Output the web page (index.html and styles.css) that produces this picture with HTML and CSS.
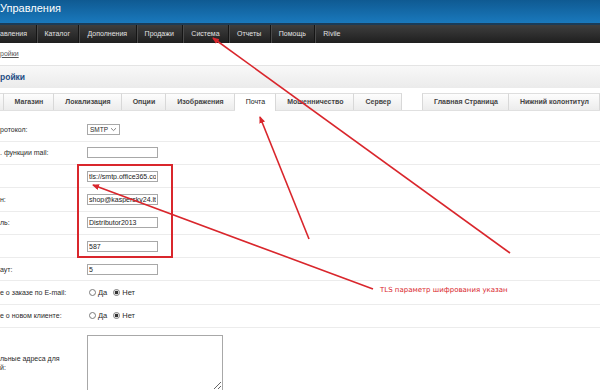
FILE: index.html
```html
<!DOCTYPE html>
<html lang="ru">
<head>
    <meta charset="UTF-8">
    <meta name="viewport" content="width=device-width, initial-scale=1.0">
    <title>Настройки</title>
    <link rel="stylesheet" href="styles.css">
</head>
<body>
<div class="page">

    <div class="header">
        <h1>Управления</h1>
    </div>

    <ul class="menu">
        <li>авления</li>
        <li>Каталог</li>
        <li>Дополнения</li>
        <li>Продажи</li>
        <li>Система</li>
        <li>Отчеты</li>
        <li>Помощь</li>
        <li>Rivile</li>
    </ul>

    <div class="breadcrumb"><a href="#">ройки</a></div>

    <div class="heading"><h2>ройки</h2></div>

    <div class="tabs">
        <a class="tab tab-cut" href="#"></a>
        <a class="tab" href="#">Магазин</a>
        <a class="tab" href="#">Локализация</a>
        <a class="tab" href="#">Опции</a>
        <a class="tab" href="#">Изображения</a>
        <a class="tab active" href="#">Почта</a>
        <a class="tab" href="#">Мошенничество</a>
        <a class="tab" href="#">Сервер</a>
        <a class="tab tab-gap" href="#">Главная Страница</a>
        <a class="tab" href="#">Нижний колонтитул</a>
    </div>

    <form class="form">
        <div class="row">
            <label>ротокол:</label>
            <div class="select">SMTP
                <svg width="7" height="5" viewBox="0 0 7 5"><path d="M1 1.2 L3.5 3.6 L6 1.2" fill="none" stroke="#777" stroke-width="0.9"/></svg>
            </div>
        </div>
        <div class="row">
            <label>. функции mail:</label>
            <input type="text" class="text" value="">
        </div>
        <div class="row">
            <label></label>
            <input type="text" class="text" value="tls://smtp.office365.com">
        </div>
        <div class="row">
            <label>н:</label>
            <input type="text" class="text" value="shop@kaspersky24.lt">
        </div>
        <div class="row">
            <label>ль:</label>
            <input type="text" class="text" value="Distributor2013">
        </div>
        <div class="row">
            <label></label>
            <input type="text" class="text" value="587">
        </div>
        <div class="row">
            <label>аут:</label>
            <input type="text" class="text" value="5">
        </div>
        <div class="row">
            <label>е о заказе по E-mail:</label>
            <input type="radio" name="alert_mail"> <span class="opt">Да</span>
            <input type="radio" name="alert_mail" checked> <span class="opt">Нет</span>
        </div>
        <div class="row">
            <label>е о новом клиенте:</label>
            <input type="radio" name="account_mail"> <span class="opt">Да</span>
            <input type="radio" name="account_mail" checked> <span class="opt">Нет</span>
        </div>
        <div class="row row-tall">
            <label>льные адреса для<br>й:</label>
            <textarea class="area"></textarea>
        </div>
    </form>

    <!-- red notes drawn over the screenshot -->
    <svg class="notes" width="600" height="390" viewBox="0 0 600 390">
        <defs>
            <marker id="head" markerWidth="7" markerHeight="6" refX="6" refY="3" orient="auto" markerUnits="userSpaceOnUse">
                <path d="M0 0 L7 3 L0 6 Z" fill="#d9262c"/>
            </marker>
        </defs>
        <rect x="78" y="165" width="94" height="92" fill="none" stroke="#d9262c" stroke-width="2"/>
        <line x1="510" y1="253" x2="213" y2="38" stroke="#d9262c" stroke-width="1.6" marker-end="url(#head)"/>
        <line x1="309" y1="239" x2="260" y2="117" stroke="#d9262c" stroke-width="1.6" marker-end="url(#head)"/>
        <line x1="373" y1="289" x2="93" y2="185" stroke="#d9262c" stroke-width="1.6" marker-end="url(#head)"/>
        <text x="380" y="292" class="note-text">TLS параметр шифрования указан</text>
    </svg>

</div>
</body>
</html>
```

FILE: styles.css
```css
body {
    margin: 0;
    font-family: "Liberation Sans", Arial, sans-serif;
    color: #2a2a2a;
    background: #fff;
}
.page {
    position: relative;
    width: 600px;
    height: 390px;
    overflow: hidden;
}
.header {
    height: 23px;
    background: linear-gradient(#0f5a92, #1a79bd);
    border-bottom: 2px solid #1b3c58;
}
.header h1 {
    margin: 0;
    padding-top: 2px;
    font-size: 11px;
    line-height: 13px;
    font-weight: normal;
    color: #fff;
}
.menu {
    display: flex;
    margin: 0;
    padding: 0;
    list-style: none;
    height: 18px;
    background: linear-gradient(#3e3e3e, #1f1f1f);
}
.menu li {
    padding: 0 8.5px 0 8px;
    font-size: 7px;
    line-height: 18px;
    color: #e2e2e2;
    border-left: 1px solid #151515;
    box-shadow: inset 1px 0 #4a4a4a;
}
.menu li:first-child {
    padding-left: 0;
    border-left: none;
    box-shadow: none;
}
.breadcrumb {
    height: 22px;
    box-sizing: border-box;
    padding-top: 5.5px;
    font-size: 7px;
    line-height: 10px;
}
.breadcrumb a {
    color: #555;
}
.heading {
    height: 23px;
    box-sizing: border-box;
    border-top: 1px solid #e4e4e4;
    background: linear-gradient(#f8f8f8, #ebebeb);
}
.heading h2 {
    margin: 0;
    font-size: 8.5px;
    line-height: 22px;
    color: #1d4c84;
}
.tabs {
    display: flex;
    margin-top: 5px;
    height: 18px;
    box-sizing: border-box;
    border-bottom: 1px solid #e0e0e0;
}
.tab {
    display: block;
    height: 17px;
    padding: 0 10px 0 11px;
    box-sizing: border-box;
    border-top: 1px solid #dedede;
    border-right: 1px solid #d8d8d8;
    background: linear-gradient(#fdfdfd, #ececec);
    font-size: 7px;
    font-weight: bold;
    line-height: 16px;
    color: #444;
    text-decoration: none;
    white-space: nowrap;
}
.tab-cut {
    width: 5px;
    padding: 0;
}
.tab.active {
    height: 18px;
    background: #fff;
    font-weight: normal;
    color: #222;
}
.tab-gap {
    margin-left: 20px;
    border-left: 1px solid #d8d8d8;
}
.form {
    padding-top: 7.4px;
    margin: 0;
}
.row {
    display: flex;
    align-items: center;
    height: 23.3px;
    box-sizing: border-box;
    border-bottom: 1px solid #ececec;
    font-size: 7px;
}
.row label {
    flex: none;
    width: 87px;
    line-height: 9px;
}
.row-tall {
    height: auto;
    padding: 6.5px 0 0;
    border-bottom: none;
}
.text {
    width: 71px;
    height: 11px;
    box-sizing: border-box;
    margin: 0;
    padding: 0 1px;
    border: 1px solid #a8a8a8;
    font-family: "Liberation Sans", Arial, sans-serif;
    font-size: 7px;
    color: #222;
}
.select {
    display: flex;
    align-items: center;
    justify-content: space-between;
    width: 33px;
    height: 11px;
    box-sizing: border-box;
    padding: 0 2px 0 2px;
    border: 1px solid #a8a8a8;
    font-size: 6.5px;
}
input[type="radio"] {
    appearance: none;
    width: 7px;
    height: 7px;
    margin: 0 2px 0 2px;
    border: 1px solid #7a7a7a;
    border-radius: 50%;
    background: #fff;
}
input[type="radio"]:checked {
    background: radial-gradient(circle, #333 0 1.6px, #fff 2.1px);
}
.opt {
    margin-right: 4px;
    font-size: 7.5px;
}
.area {
    width: 136px;
    height: 56px;
    box-sizing: border-box;
    margin: 0;
    border: 1px solid #a8a8a8;
}
.notes {
    position: absolute;
    top: 0;
    left: 0;
    pointer-events: none;
}
.note-text {
    font-family: "DejaVu Sans", sans-serif;
    font-size: 7px;
    fill: #d9262c;
}
```
